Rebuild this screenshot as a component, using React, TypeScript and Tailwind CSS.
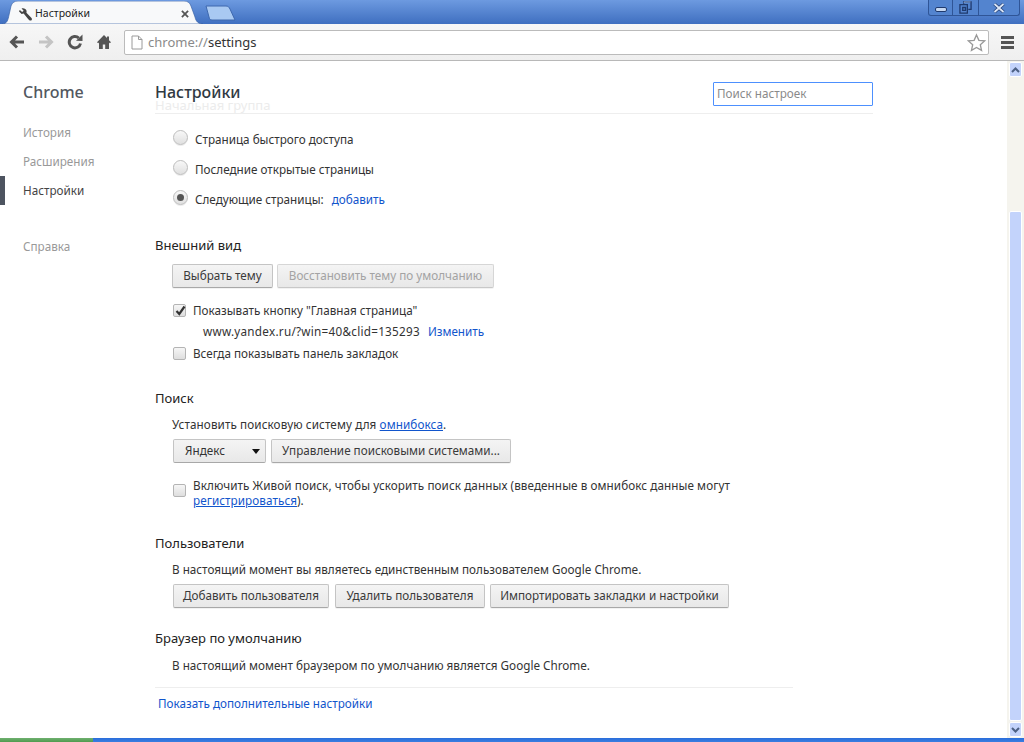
const Btn = ({ label, disabled, className = "" }: { label: string; disabled?: boolean; className?: string }) => (
  <button
    className={
      "h-6 whitespace-nowrap rounded-[2px] border border-b-[#a8a8a8] border-[#c4c4c4] bg-gradient-to-b from-[#f4f4f4] to-[#e8e8e8] shadow-[0_1px_0_rgba(0,0,0,0.05)] " +
      (disabled ? "text-[#a3a3a3] border-[#d6d6d6] border-b-[#c8c8c8] " : "text-[#3a3a3a] ") +
      className
    }
  >
    {label}
  </button>
);

const Radio = ({ checked }: { checked?: boolean }) => (
  <span className="mb-[6px] flex h-[15px] w-[15px] shrink-0 items-center justify-center rounded-full border border-[#bdbdbd] bg-gradient-to-b from-[#f8f8f8] to-[#e0e0e0] shadow-[0_1px_0_rgba(0,0,0,0.08)]">
    {checked && <span className="h-[7px] w-[7px] rounded-full bg-[#555]" />}
  </span>
);

const Check = ({ checked }: { checked?: boolean }) => (
  <span className="relative flex h-[13px] w-[13px] shrink-0 items-center justify-center rounded-[2px] border border-[#b4b4b4] bg-gradient-to-b from-[#f6f6f6] to-[#dedede]">
    {checked && (
      <svg viewBox="0 0 13 13" className="absolute -top-[1px] left-0 h-[13px] w-[13px]">
        <path d="M2.5 7l2.8 3L10.500 2.500" fill="none" stroke="#333" strokeWidth="2.200" />
      </svg>
    )}
  </span>
);

const SectionTitle = ({ children, className = "" }: { children: string; className?: string }) => (
  <h3 className={"h-5 text-[13px] leading-5 text-[#222] " + className}>{children}</h3>
);

const Link = ({ children, underline }: { children: string; underline?: boolean }) => (
  <a className={"text-[#1155cc] " + (underline ? "underline" : "")}>{children}</a>
);

const TitleBar = () => (
  <div className="relative flex h-6 items-end bg-gradient-to-b from-[#6d9ae0] to-[#3f6fc0] pl-[2px]">
    <div className="relative flex h-[23px] w-[201px] items-center pl-[16px] pr-[14px] pt-[3px]">
      <svg viewBox="0 0 201 23" className="absolute left-0 top-0 h-[23px] w-[201px]">
        <path d="M0 23C5 23 6 19 7 14L9 5C10 2 12 0 16 0H182C186 0 188 2 189 5L193 16C194 21 197 23 201 23Z" fill="#f8f9fa" stroke="#3a63a8" strokeWidth="0.7" />
      </svg>
      <svg viewBox="0 0 16 16" className="relative h-[15px] w-[15px]">
        <path d="M1 4.500L3.800 7.500 6 7 11 13C12 14.200 12.800 14.800 13.800 14.400 15 14 15.200 12.600 14.400 11.600L9 6 9.200 4.200C8.600 2 6 .8 3.800 1.600L6 4 4.400 5.400 2 3.200Z" fill="#444" />
      </svg>
      <span className="relative ml-[2px] flex-1 text-[10.5px] text-[#222]">Настройки</span>
      <svg viewBox="0 0 9 9" className="relative h-[8px] w-[8px]">
        <path d="M1 1l7 7M8 1l-7 7" stroke="#555" strokeWidth="2" />
      </svg>
    </div>
    <svg viewBox="0 0 31 16" className="mb-[3px] ml-[2px] h-[16px] w-[31px]">
      <path d="M1 1H21C23 1 24 2 25 4L30 15H7C5 15 4.500 14 4 12Z" fill="#a9c9f2" stroke="#3e68ae" strokeWidth="1" />
    </svg>
    <div className="absolute right-[4px] top-0 flex h-4 w-[92px] rounded-b-[3px] border border-t-0 border-[#2f5597] bg-[#5384cf]">
      <div className="flex w-[24px] items-center justify-center border-r border-[#2f5597]">
        <span className="mt-[3px] h-[5px] w-[12px] rounded-[2px] border border-[#1f3a6e] bg-[#c6d8f2]" />
      </div>
      <div className="flex w-[26px] items-center justify-center border-r border-[#2f5597]">
        <svg viewBox="0 0 14 14" className="h-[13px] w-[13px]">
          <path d="M5 3V1h8v8h-3M1 4h8v9H1ZM4 7h3v3H4Z" fill="none" stroke="#1f3a6e" strokeWidth="1.400" />
          <path d="M5.500 2V1h7" fill="none" stroke="#d6e4f7" strokeWidth="0.600" />
        </svg>
      </div>
      <div className="flex flex-1 items-center justify-center">
        <svg viewBox="0 0 12 10" className="h-[10px] w-[12px]">
          <path d="M1.500 1l9 8M10.500 1l-9 8" stroke="#1f3a6e" strokeWidth="3.200" />
          <path d="M1.500 1l9 8M10.500 1l-9 8" stroke="#dbe7f8" strokeWidth="1.800" />
        </svg>
      </div>
    </div>
  </div>
);

const Toolbar = () => (
  <div className="flex h-[37px] items-center border-b border-[#b8b8b8] bg-gradient-to-b from-[#f7f7f7] to-[#efefef] pl-[9px] pr-[10px]">
    <svg viewBox="0 0 16 14" className="h-[14px] w-[16px]">
      <path d="M8 1.500L2.500 7 8 12.500M3 7h12" fill="none" stroke="#555" strokeWidth="3" />
    </svg>
    <svg viewBox="0 0 16 14" className="ml-[13px] h-[14px] w-[16px]">
      <path d="M8 1.500L13.500 7 8 12.500M13 7H1" fill="none" stroke="#c4c4c4" strokeWidth="3" />
    </svg>
    <svg viewBox="0 0 16 16" className="ml-[13px] h-[16px] w-[16px]">
      <path d="M13.500 9.500A5.700 5.700 0 1 1 11.800 4" fill="none" stroke="#555" strokeWidth="3" />
      <path d="M9 6.800L15.500 7V.5Z" fill="#555" />
    </svg>
    <svg viewBox="0 0 16 16" className="ml-[13px] h-[16px] w-[16px]">
      <path d="M8 1L1 8.200l1.200 1L3 8.600V15h3.800v-4.500h2.400V15H13V8.600l.8.6 1.200-1-2-2V2.500h-2V4Z" fill="#555" />
    </svg>
    <div className="ml-[12px] flex h-[25px] flex-1 items-center rounded-[2px] border border-[#bbb] bg-white pl-[6px] pr-[2px]">
      <svg viewBox="0 0 12 15" className="h-[15px] w-[12px]">
        <path d="M1 1h6.500L11 4.500V14H1Z M7.500 1v3.500H11" fill="#fff" stroke="#9a9a9a" />
      </svg>
      <span className="ml-[5px] flex-1 pt-[2px] text-[13px] text-[#8a8a8a]">
        chrome://<span className="text-[#333]">settings</span>
      </span>
      <svg viewBox="0 0 20 19" className="h-[19px] w-[19px]">
        <path d="M10 1.500l2.500 5.700 6 .6-4.500 4 1.300 6L10 14.700l-5.300 3.100 1.300-6-4.500-4 6-.6Z" fill="#fff" stroke="#999" strokeWidth="1.400" />
      </svg>
    </div>
    <div className="ml-[12px] flex w-[13px] flex-col gap-[2px]">
      <span className="h-[3px] bg-[#555]" />
      <span className="h-[3px] bg-[#555]" />
      <span className="h-[3px] bg-[#555]" />
    </div>
  </div>
);

const Sidebar = () => (
  <aside className="w-[155px] shrink-0 pt-[20px]">
    <div className="h-[22px] pl-[23px] text-[16px] font-medium leading-[22px] text-[#53585f]">Chrome</div>
    <nav className="mt-[15px] flex flex-col text-[#999]">
      <a className="flex h-[29px] items-center pl-[23px]">История</a>
      <a className="flex h-[29px] items-center pl-[23px]">Расширения</a>
      <a className="flex h-[29px] items-center border-l-[5px] border-[#4d5460] pl-[18px] text-[#444]">Настройки</a>
      <a className="mt-[27px] flex h-[29px] items-center pl-[23px]">Справка</a>
    </nav>
  </aside>
);

const Main = () => (
  <main className="flex-1 pt-[21px] text-[#333]">
    <header className="relative flex h-[32px] w-[718px] items-start justify-between border-b border-[#eee]">
      <h1 className="h-5 text-[16px] font-medium leading-5 text-[#303942]">Настройки</h1>
      <div className="flex h-6 w-40 items-center rounded-[1px] border border-[#4d90fe] pl-[3px] text-[#8a8a8a]">Поиск настроек</div>
      <span className="absolute left-0 top-[15px] text-[13px] leading-[16px] text-[#ececec]">Начальная группа</span>
    </header>

    <div className="w-[638px]">
      <div className="mt-[11px] flex flex-col pl-[18px]">
        {["Страница быстрого доступа", "Последние открытые страницы"].map((t) => (
          <label key={t} className="flex h-[30px] items-center gap-[7px]">
            <Radio />
            <span>{t}</span>
          </label>
        ))}
        <label className="flex h-[30px] items-center gap-[7px]">
          <Radio checked />
          <span>Следующие страницы:</span>
          <span className="ml-[1px]"><Link>добавить</Link></span>
        </label>
      </div>

      <SectionTitle className="mt-[20px]">Внешний вид</SectionTitle>
      <div className="mt-[9px] flex gap-[4px] pl-[17px]">
        <Btn label="Выбрать тему" className="w-[101px]" />
        <Btn label="Восстановить тему по умолчанию" disabled className="w-[217px]" />
      </div>
      <div className="mt-[12px] flex h-[21px] items-center gap-[7px] pl-[18px]">
        <Check checked />
        <span>Показывать кнопку "Главная страница"</span>
      </div>
      <div className="flex h-[22px] items-center gap-[8px] pl-[48px]">
        <span className="tracking-[0.27px]">www.yandex.ru/?win=40&amp;clid=135293</span>
        <Link>Изменить</Link>
      </div>
      <div className="flex h-[21px] items-center gap-[7px] pl-[18px]">
        <Check />
        <span>Всегда показывать панель закладок</span>
      </div>

      <SectionTitle className="mt-[24px]">Поиск</SectionTitle>
      <p className="mt-[6px] h-5 pl-[17px] leading-5 tracking-[0.1px]">
        Установить поисковую систему для <Link underline>омнибокса</Link>.
      </p>
      <div className="mt-[5px] flex gap-[5px] pl-[18px]">
        <div className="flex h-6 w-[93px] items-center justify-between rounded-[2px] border border-[#c4c4c4] border-b-[#a8a8a8] bg-gradient-to-b from-[#f4f4f4] to-[#e8e8e8] pl-[11px] pr-[5px]">
          <span>Яндекс</span>
          <span className="h-0 w-0 border-x-[4px] border-t-[5px] border-x-transparent border-t-[#111]" />
        </div>
        <Btn label="Управление поисковыми системами..." className="w-[240px]" />
      </div>
      <div className="mt-[15px] flex gap-[7px] pl-[18px]">
        <span className="mt-[6px]"><Check /></span>
        <p className="leading-[15px] tracking-[0.08px]">
          Включить Живой поиск, чтобы ускорить поиск данных (введенные в омнибокс данные могут <Link underline>регистрироваться</Link>).
        </p>
      </div>

      <SectionTitle className="mt-[25px]">Пользователи</SectionTitle>
      <p className="mt-[6px] h-5 pl-[17px] leading-5">В настоящий момент вы являетесь единственным пользователем Google Chrome.</p>
      <div className="mt-[5px] flex gap-[5px] pl-[18px]">
        <Btn label="Добавить пользователя" className="w-[156px]" />
        <Btn label="Удалить пользователя" className="ml-[1px] w-[150px]" />
        <Btn label="Импортировать закладки и настройки" className="w-[239px]" />
      </div>

      <SectionTitle className="mt-[20px]">Браузер по умолчанию</SectionTitle>
      <p className="mt-[7px] h-5 pl-[17px] leading-5">В настоящий момент браузером по умолчанию является Google Chrome.</p>
      <div className="mt-[12px] border-t border-[#eee] pl-[3px] pt-[6px] leading-[18px]">
        <span className="block"><Link>Показать дополнительные настройки</Link></span>
      </div>
    </div>
  </main>
);

const Scrollbar = () => (
  <div className="flex w-[17px] shrink-0 flex-col bg-[#f5f4ee] px-[2px] pb-[1px] pt-[1px]">
    <div className="flex h-[15px] items-center justify-center rounded-[2px] border border-white bg-[#c3d3fb]">
      <svg viewBox="0 0 9 6" className="h-[6px] w-[9px]"><path d="M1 5l3.500-3.500L8 5" fill="none" stroke="#4d6185" strokeWidth="2" /></svg>
    </div>
    <div className="flex-1" />
    <div className="h-[510px] rounded-[2px] border border-white bg-[#c3d3fb]" />
    <div className="mt-[1px] flex h-[15px] items-center justify-center rounded-[2px] border border-white bg-[#c3d3fb]">
      <svg viewBox="0 0 9 6" className="h-[6px] w-[9px]"><path d="M1 1l3.500 3.500L8 1" fill="none" stroke="#4d6185" strokeWidth="2" /></svg>
    </div>
  </div>
);

export default function App() {
  return (
    <div className="flex h-[742px] w-[1024px] flex-col overflow-hidden bg-white font-['Noto_Sans',sans-serif] text-[11.7px]">
      <TitleBar />
      <Toolbar />
      <div className="flex min-h-0 flex-1">
        <Sidebar />
        <Main />
        <Scrollbar />
      </div>
      <div className="flex h-[4px] bg-gradient-to-b from-[#2a6ddb] to-[#3a7ee0]">
        <div className="w-[93px] bg-gradient-to-b from-[#6fb06f] to-[#4f9b4f]" />
      </div>
    </div>
  );
}
